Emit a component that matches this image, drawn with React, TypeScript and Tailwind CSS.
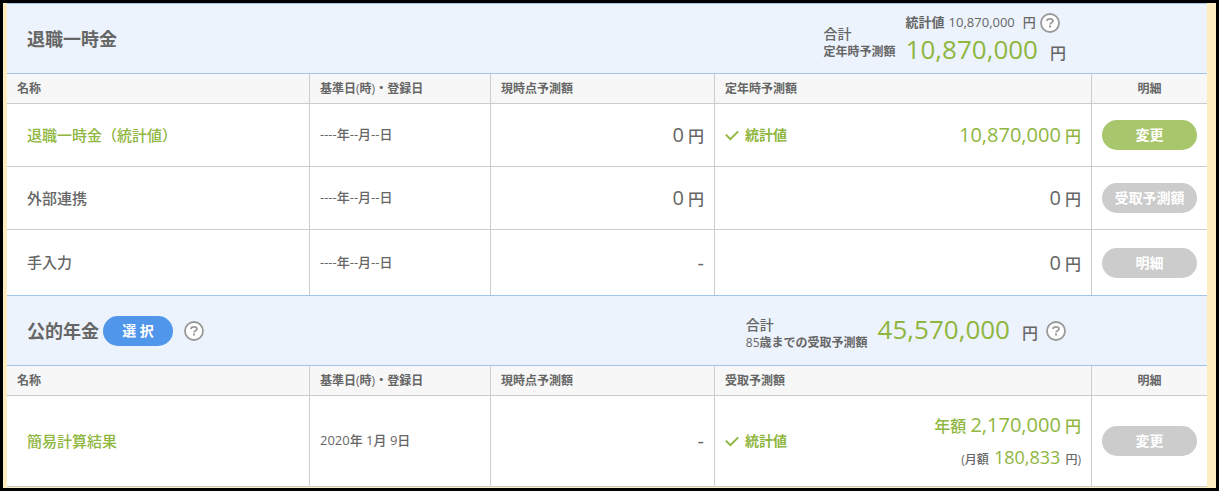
import type { ReactNode } from "react";
import clsx from "clsx";

interface Row {
  name: string;
  date: string;
  current: string;
  isStatistic?: boolean;
  forecast: string;
  monthly?: string;
  action: string;
  enabled?: boolean;
  height: string;
}

interface SectionProps {
  id: string;
  title: string;
  extra?: ReactNode;
  summary: ReactNode;
  forecastLabel: string;
  rows: Row[];
}

const lumpSumRows: Row[] = [
  {
    name: "退職一時金（統計値）",
    date: "----年--月--日",
    current: "0",
    isStatistic: true,
    forecast: "10,870,000",
    action: "変更",
    enabled: true,
    height: "h-[63px]",
  },
  { name: "外部連携", date: "----年--月--日", current: "0", forecast: "0", action: "受取予測額", height: "h-[63px]" },
  { name: "手入力", date: "----年--月--日", current: "-", forecast: "0", action: "明細", height: "h-[66px]" },
];

const pensionRows: Row[] = [
  {
    name: "簡易計算結果",
    date: "2020年 1月 9日",
    current: "-",
    isStatistic: true,
    forecast: "2,170,000",
    monthly: "180,833",
    action: "変更",
    height: "h-[91px]",
  },
];

function HelpButton() {
  return (
    <button type="button" aria-label="ヘルプ" className="block size-5 shrink-0">
      <svg viewBox="0 0 20 20" className="size-5" fill="none" stroke="#999" strokeWidth="1.8">
        <circle cx="10" cy="10" r="9" fill="#fff" />
        <path d="M7 8.1C7 6.6 8.3 5.9 10 5.9s3 .7 3 2.1c0 1.8-2.9 1.6-2.9 3.4" />
        <path d="M10 12.6v1.8" strokeWidth="2" />
      </svg>
    </button>
  );
}

function CheckIcon() {
  return (
    <svg viewBox="0 0 14 11" className="h-[11px] w-3.5" fill="none" stroke="#8fb63f" strokeWidth="2" aria-hidden="true">
      <path d="M.8 4.6 5.4 9.2 13.2 1.4" />
    </svg>
  );
}

function Yen({ value }: { value: string }) {
  if (value === "-") return <span className="text-xl">-</span>;
  return (
    <>
      <span className="text-xl">{value}</span> <span className="text-base font-medium">円</span>
    </>
  );
}

function Section({ id, title, extra, summary, forecastLabel, rows }: SectionProps) {
  return (
    <section aria-labelledby={id}>
      <header className="flex h-[71px] items-center justify-between border-y border-[#a3c5e9] bg-[#ecf3fc] pr-[141px] pl-5">
        <div className="flex items-center">
          <h2 id={id} className="text-lg font-bold">
            {title}
          </h2>
          {extra}
        </div>
        {summary}
      </header>
      <table className="w-full table-fixed border-separate border-spacing-0 text-left">
        <colgroup>
          <col className="w-[303px]" />
          <col className="w-[181px]" />
          <col className="w-56" />
          <col />
          <col className="w-[115px]" />
        </colgroup>
        <thead>
          <tr className="h-[30px] bg-[#f7f7f7] text-xs *:border-b *:border-[#ccc] *:px-2.5 *:font-bold">
            <th className="border-r">名称</th>
            <th className="border-r">
              基準日<span className="font-normal">(</span>時<span className="font-normal">)</span>・登録日
            </th>
            <th className="border-r">現時点予測額</th>
            <th className="border-r">{forecastLabel}</th>
            <th className="text-center">明細</th>
          </tr>
        </thead>
        <tbody>
          {rows.map((row) => (
            <tr key={row.name} className={clsx("*:border-b *:border-[#ccc]", row.height)}>
              <td className="border-r pl-5 text-[15px] font-medium">
                {row.isStatistic ? (
                  <a href="#detail" className="text-[#8fb63f]">
                    {row.name}
                  </a>
                ) : (
                  row.name
                )}
              </td>
              <td className="border-r px-2.5 text-[13px] font-medium">{row.date}</td>
              <td className="border-r px-2.5 text-right">
                <Yen value={row.current} />
              </td>
              <td className="border-r px-2.5">
                <div className={clsx("flex items-center", row.isStatistic && "text-[#8fb63f]")}>
                  {row.isStatistic && (
                    <span className="flex items-center gap-1.5 text-sm font-bold">
                      <CheckIcon />
                      統計値
                    </span>
                  )}
                  <div className="ml-auto text-right">
                    {row.monthly && <span className="text-base font-medium">年額 </span>}
                    <Yen value={row.forecast} />
                    {row.monthly && (
                      <p className="pt-1 text-xs font-medium text-[#666]">
                        (月額 <span className="mx-0.5 text-lg font-normal text-[#8fb63f]">{row.monthly}</span> 円)
                      </p>
                    )}
                  </div>
                </div>
              </td>
              <td className="px-2.5">
                <button
                  type="button"
                  disabled={!row.enabled}
                  className={clsx(
                    "block h-[30px] w-full rounded-full text-sm font-bold text-white",
                    row.enabled ? "bg-[#a8c66c]" : "bg-[#ccc]"
                  )}
                >
                  {row.action}
                </button>
              </td>
            </tr>
          ))}
        </tbody>
      </table>
    </section>
  );
}

export default function App() {
  return (
    <div className="border-3 border-black bg-[#feedc0] pr-[9px] pb-px pl-1 font-['Open_Sans','Noto_Sans_CJK_JP',sans-serif] text-[#666]">
      <main lang="ja" className="bg-white">
        <Section
          id="lump-sum"
          title="退職一時金"
          forecastLabel="定年時予測額"
          rows={lumpSumRows}
          summary={
            <div className="flex items-center gap-2.5">
              <div className="pt-1.5">
                <p className="text-sm leading-5 font-medium">合計</p>
                <p className="text-xs font-bold">定年時予測額</p>
              </div>
              <div className="pt-1">
                <div className="flex h-5 items-center text-[13px] font-medium">
                  <span className="mr-1 font-bold">統計値</span>
                  <span className="font-normal">10,870,000</span>
                  <span className="mr-1 ml-2">円</span>
                  <HelpButton />
                </div>
                <p className="leading-8">
                  <span className="mr-3 text-[26px] text-[#8fb63f]">10,870,000</span>
                  <span className="text-base font-medium">円</span>
                </p>
              </div>
            </div>
          }
        />
        <div className="-mt-px">
          <Section
            id="pension"
            title="公的年金"
            forecastLabel="受取予測額"
            rows={pensionRows}
            extra={
              <>
                <button
                  type="button"
                  className="mr-[11px] ml-1 h-[30px] w-[70px] rounded-full bg-[#5096eb] text-sm font-bold text-white"
                >
                  選 択
                </button>
                <HelpButton />
              </>
            }
            summary={
              <div className="flex items-center gap-2.5">
                <div className="pt-1">
                  <p className="text-sm leading-5 font-medium">合計</p>
                  <p className="text-xs font-bold">
                    <span className="font-normal">85</span>歳までの受取予測額
                  </p>
                </div>
                <div className="flex items-center gap-2">
                  <p className="leading-8">
                    <span className="mr-3 text-[26px] text-[#8fb63f]">45,570,000</span>
                    <span className="text-base font-medium">円</span>
                  </p>
                  <HelpButton />
                </div>
              </div>
            }
          />
        </div>
      </main>
    </div>
  );
}
